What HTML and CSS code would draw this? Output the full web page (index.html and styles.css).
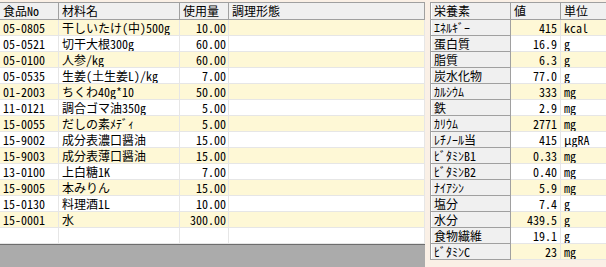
FILE: index.html
```html
<!DOCTYPE html>
<html lang="ja">
<head>
<meta charset="utf-8">
<title>食品</title>
<link rel="stylesheet" href="styles.css">
</head>
<body>
<div class="form">
  <section class="lgrid">
    <div class="row head">
      <div class="cell">食品No</div><div class="cell">材料名</div><div class="cell">使用量</div><div class="cell">調理形態</div>
    </div>
    <div class="row alt"><div class="cell">05-0805</div><div class="cell">干しいたけ(中)500g</div><div class="cell num">10.00</div><div class="cell"></div></div>
    <div class="row"><div class="cell">05-0521</div><div class="cell">切干大根300g</div><div class="cell num">60.00</div><div class="cell"></div></div>
    <div class="row alt"><div class="cell">05-0100</div><div class="cell">人参/kg</div><div class="cell num">60.00</div><div class="cell"></div></div>
    <div class="row"><div class="cell">05-0535</div><div class="cell">生姜(土生姜L)/kg</div><div class="cell num">7.00</div><div class="cell"></div></div>
    <div class="row alt"><div class="cell">01-2003</div><div class="cell">ちくわ40g*10</div><div class="cell num">50.00</div><div class="cell"></div></div>
    <div class="row"><div class="cell">11-0121</div><div class="cell">調合ゴマ油350g</div><div class="cell num">5.00</div><div class="cell"></div></div>
    <div class="row alt"><div class="cell">15-0055</div><div class="cell">だしの素ﾒﾃﾞｨ</div><div class="cell num">5.00</div><div class="cell"></div></div>
    <div class="row"><div class="cell">15-9002</div><div class="cell">成分表濃口醤油</div><div class="cell num">15.00</div><div class="cell"></div></div>
    <div class="row alt"><div class="cell">15-9003</div><div class="cell">成分表薄口醤油</div><div class="cell num">15.00</div><div class="cell"></div></div>
    <div class="row"><div class="cell">13-0100</div><div class="cell">上白糖1K</div><div class="cell num">7.00</div><div class="cell"></div></div>
    <div class="row alt"><div class="cell">15-9005</div><div class="cell">本みりん</div><div class="cell num">15.00</div><div class="cell"></div></div>
    <div class="row"><div class="cell">15-0130</div><div class="cell">料理酒1L</div><div class="cell num">10.00</div><div class="cell"></div></div>
    <div class="row alt"><div class="cell">15-0001</div><div class="cell">水</div><div class="cell num">300.00</div><div class="cell"></div></div>
    <div class="row"><div class="cell"></div><div class="cell"></div><div class="cell"></div><div class="cell"></div></div>
    <div class="fill"></div>
  </section>
  <section class="rgrid">
    <div class="row head">
      <div class="cell rh">栄養素</div><div class="cell">値</div><div class="cell">単位</div>
    </div>
    <div class="row alt"><div class="cell rh">ｴﾈﾙｷﾞｰ</div><div class="cell num">415</div><div class="cell">kcal</div></div>
    <div class="row"><div class="cell rh">蛋白質</div><div class="cell num">16.9</div><div class="cell">g</div></div>
    <div class="row alt"><div class="cell rh">脂質</div><div class="cell num">6.3</div><div class="cell">g</div></div>
    <div class="row"><div class="cell rh">炭水化物</div><div class="cell num">77.0</div><div class="cell">g</div></div>
    <div class="row alt"><div class="cell rh">ｶﾙｼｳﾑ</div><div class="cell num">333</div><div class="cell">mg</div></div>
    <div class="row"><div class="cell rh">鉄</div><div class="cell num">2.9</div><div class="cell">mg</div></div>
    <div class="row alt"><div class="cell rh">ｶﾘｳﾑ</div><div class="cell num">2771</div><div class="cell">mg</div></div>
    <div class="row"><div class="cell rh">ﾚﾁﾉｰﾙ当</div><div class="cell num">415</div><div class="cell">μgRA</div></div>
    <div class="row alt"><div class="cell rh">ﾋﾞﾀﾐﾝB1</div><div class="cell num">0.33</div><div class="cell">mg</div></div>
    <div class="row"><div class="cell rh">ﾋﾞﾀﾐﾝB2</div><div class="cell num">0.40</div><div class="cell">mg</div></div>
    <div class="row alt"><div class="cell rh">ﾅｲｱｼﾝ</div><div class="cell num">5.9</div><div class="cell">mg</div></div>
    <div class="row"><div class="cell rh">塩分</div><div class="cell num">7.4</div><div class="cell">g</div></div>
    <div class="row alt"><div class="cell rh">水分</div><div class="cell num">439.5</div><div class="cell">g</div></div>
    <div class="row"><div class="cell rh">食物繊維</div><div class="cell num">19.1</div><div class="cell">g</div></div>
    <div class="row alt"><div class="cell rh">ﾋﾞﾀﾐﾝC</div><div class="cell num">23</div><div class="cell">mg</div></div>
  </section>
</div>
</body>
</html>
```

FILE: styles.css
```css
html, body {
  margin: 0;
  padding: 0;
  background: #faf0e6;
}
body {
  width: 606px;
  height: 267px;
  overflow: hidden;
  font-family: "Noto Sans Mono CJK JP", "Noto Sans CJK JP", sans-serif;
  font-size: 12px;
  color: #000;
}
.form {
  display: flex;
  gap: 5px;
  height: 265px;
  padding-top: 2px;
}
.lgrid {
  width: 425px;
  flex: none;
  display: flex;
  flex-direction: column;
  background: #fff;
}
.rgrid {
  flex: 1;
  overflow: hidden;
  align-self: flex-start;
  background: #fff;
  border-left: 1px solid #a0a0a0;
  min-width: 0;
}
.row {
  display: grid;
  height: 16px;
  flex: none;
}
.lgrid .row {
  grid-template-columns: 59px 121px 49px 196px;
}
.rgrid .row {
  grid-template-columns: 80px 50px 80px;
}
.cell {
  box-sizing: border-box;
  border-right: 1px solid #e6e6e6;
  border-bottom: 1px solid #e6e6e6;
  padding: 0 3px;
  line-height: 15px;
  white-space: nowrap;
  overflow: hidden;
}
.row.alt .cell {
  background: #fef8d6;
}
.num {
  text-align: right;
  padding-right: 2px;
}
.rgrid .num {
  padding-right: 3px;
}
.row.head {
  height: 18px;
}
.row.head .cell {
  background: #f0f0f0;
  border-top: 1px solid #a0a0a0;
  border-bottom: 1px solid #a0a0a0;
  border-right: 1px solid #a0a0a0;
  line-height: 16px;
}
.rgrid .cell.rh,
.rgrid .row.alt .cell.rh {
  background: #f0f0f0;
  border-right: 1px solid #a0a0a0;
  border-bottom: 1px solid #a0a0a0;
  box-shadow: inset 1px 0 #fff;
}
.fill {
  flex: 1;
  background: #ababab;
  border-top: 1px solid #6d6d6d;
}
```
